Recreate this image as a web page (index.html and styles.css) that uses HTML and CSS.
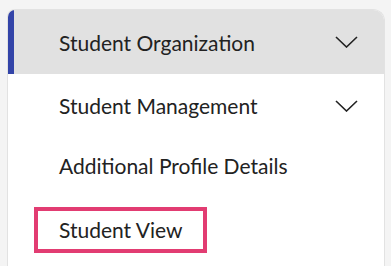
FILE: index.html
```html
<!DOCTYPE html>
<html lang="en">
<head>
    <meta charset="UTF-8">
    <meta name="viewport" content="width=device-width, initial-scale=1.0">
    <title>Student Menu</title>
    <link rel="stylesheet" href="styles.css">
</head>
<body>
    <nav class="menu">
        <div class="menu-header">
            <span class="menu-label">Student Organization</span>
            <svg class="chevron" width="23" height="12" viewBox="0 0 23 12"><path d="M1 1 L11.5 11 L22 1" fill="none" stroke="#222" stroke-width="1.6"/></svg>
        </div>
        <div class="menu-item item-sub">
            <span class="menu-label">Student Management</span>
            <svg class="chevron" width="23" height="12" viewBox="0 0 23 12"><path d="M1 1 L11.5 11 L22 1" fill="none" stroke="#222" stroke-width="1.6"/></svg>
        </div>
        <div class="menu-item item-plain">
            <span class="menu-label">Additional Profile Details</span>
        </div>
        <div class="menu-item item-active">
            <span class="menu-label highlight">Student View</span>
        </div>
    </nav>
</body>
</html>
```

FILE: styles.css
```css
body {
    margin: 0;
    background-color: #f4f4f4;
    font-family: Lato, "Noto Sans", sans-serif;
    color: #222;
}
.menu {
    margin: 9px 6px 0 7px;
    background-color: #fff;
    border: 1px solid #e2e2e2;
    border-bottom: none;
    border-radius: 8px 12px 0 0;
    overflow: hidden;
    height: 260px;
}
.menu-header {
    display: flex;
    align-items: center;
    justify-content: space-between;
    height: 64px;
    background-color: #e1e1e1;
    border-left: 6px solid #3344a8;
    padding: 0 26px 0 45px;
}
.menu-item {
    display: flex;
    align-items: center;
    justify-content: space-between;
    padding: 0 26px 0 51px;
}
.item-sub {
    height: 63px;
}
.item-plain {
    height: 57px;
}
.item-active {
    padding-left: 26px;
    padding-top: 13px;
}
.menu-label {
    font-size: 21px;
    white-space: nowrap;
}
.chevron {
    display: block;
}
.highlight {
    display: block;
    box-sizing: border-box;
    width: 173px;
    padding: 8px 0 9px 21px;
    border: 4px solid #e23c72;
    line-height: 21px;
}
```
